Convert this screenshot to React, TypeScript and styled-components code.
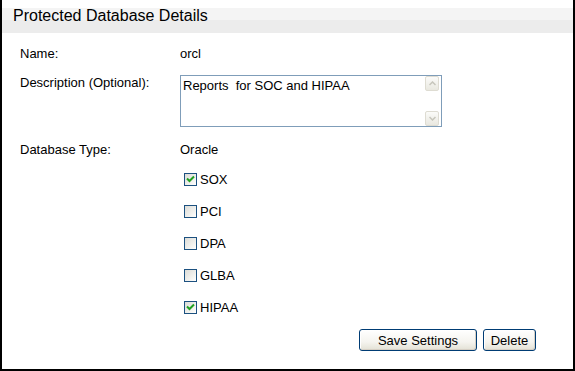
import React from "react";
import styled, { createGlobalStyle } from "styled-components";

const Global = createGlobalStyle`
  html, body { margin: 0; padding: 0; background: #fff; }
  body { font-family: "Liberation Sans", Arial, sans-serif; font-size: 13px; color: #000; }
`;

const Frame = styled.div`
  box-sizing: border-box;
  width: 575px;
  height: 371px;
  border-left: 2px solid #000;
  border-right: 2px solid #000;
  border-bottom: 2px solid #000;
  padding-top: 8px;
  display: flex;
  flex-direction: column;
  background: #fff;
`;

const Header = styled.div`
  height: 25px;
  background: linear-gradient(#f4f4f4 0, #f4f4f4 12px, #ececec 12px, #ececec 100%);
  padding-left: 11px;
  display: flex;
  align-items: flex-start;
  h1 {
    margin: 0;
    font-weight: normal;
    font-size: 16px;
    line-height: 18px;
    margin-top: -1px;
    color: #000;
  }
`;

const Body = styled.div`
  padding: 14px 0 0 18px;
  display: flex;
  flex-direction: column;
`;

const Row = styled.div<{ $gap?: number }>`
  display: grid;
  grid-template-columns: 160px 1fr;
  margin-top: ${(p) => p.$gap ?? 0}px;
  line-height: 14px;
`;

const Label = styled.div<{ $pad?: number }>`
  padding-top: ${(p) => p.$pad ?? 0}px;
`;

const TextBox = styled.div`
  box-sizing: border-box;
  width: 262px;
  height: 52px;
  border: 1px solid #7f9db9;
  display: flex;
  background: #fff;
`;

const TextInput = styled.textarea`
  flex: 1;
  border: none;
  outline: none;
  resize: none;
  overflow: hidden;
  font-family: "Liberation Sans", Arial, sans-serif;
  font-size: 13px;
  line-height: 14px;
  padding: 3px 2px;
  margin: 0;
  color: #000;
  background: transparent;
`;

const ScrollBar = styled.div`
  width: 14px;
  margin-right: 2px;
  display: flex;
  flex-direction: column;
  justify-content: space-between;
`;

const ScrollBtn = styled.div`
  box-sizing: border-box;
  width: 14px;
  height: 15px;
  border: 1px solid #dedcd2;
  border-radius: 2px;
  background: linear-gradient(#fbfbf9, #e9e8e0);
  display: flex;
  align-items: center;
  justify-content: center;
`;

const Checks = styled.div`
  display: flex;
  flex-direction: column;
  gap: 16px;
  margin-top: 14px;
  padding-left: 164px;
`;

const CheckRow = styled.label`
  display: flex;
  align-items: center;
  height: 16px;
  gap: 3px;
`;

const Box = styled.span`
  box-sizing: border-box;
  width: 13px;
  height: 13px;
  border: 1px solid #1c5180;
  background: linear-gradient(135deg, #dcdcd7 0%, #f4f4f1 70%, #fff 100%);
  display: flex;
  align-items: center;
  justify-content: center;
`;

const Actions = styled.div`
  display: flex;
  justify-content: flex-end;
  gap: 6px;
  margin-top: 14px;
  padding-right: 37px;
`;

const Button = styled.button<{ $w: number }>`
  box-sizing: border-box;
  width: ${(p) => p.$w}px;
  height: 22px;
  border: 1px solid #003c74;
  border-radius: 3px;
  background: linear-gradient(#ffffff 0%, #f5f4ef 60%, #e3e1d5 100%);
  box-shadow: inset -1px -1px 0 #d6d0c5, inset 1px 1px 0 #fff;
  font-family: "Liberation Sans", Arial, sans-serif;
  font-size: 13px;
  color: #000;
  padding: 0;
  cursor: pointer;
`;

const Arrow = ({ up }: { up?: boolean }) => (
  <svg width="7" height="5" viewBox="0 0 7 5">
    <path
      d={up ? "M0.5 4 L3.5 1 L6.5 4" : "M0.5 1 L3.5 4 L6.5 1"}
      fill="none"
      stroke="#c7c6bc"
      strokeWidth="1.5"
    />
  </svg>
);

const Check = ({ checked }: { checked: boolean }) => (
  <Box>
    {checked && (
      <svg width="9" height="8" viewBox="0 0 9 8">
        <path d="M1 3.5 L3.5 6 L8 1.5" fill="none" stroke="#21a121" strokeWidth="2" />
      </svg>
    )}
  </Box>
);

const items = [
  { name: "SOX", checked: true },
  { name: "PCI", checked: false },
  { name: "DPA", checked: false },
  { name: "GLBA", checked: false },
  { name: "HIPAA", checked: true },
];

export default function App() {
  return (
    <>
      <Global />
      <Frame>
        <Header>
          <h1>Protected Database Details</h1>
        </Header>
        <Body>
          <Row>
            <Label>Name:</Label>
            <div>orcl</div>
          </Row>
          <Row $gap={14}>
            <Label $pad={1}>Description (Optional):</Label>
            <TextBox>
              <TextInput defaultValue="Reports  for SOC and HIPAA" />
              <ScrollBar>
                <ScrollBtn>
                  <Arrow up />
                </ScrollBtn>
                <ScrollBtn>
                  <Arrow />
                </ScrollBtn>
              </ScrollBar>
            </TextBox>
          </Row>
          <Row $gap={16}>
            <Label>Database Type:</Label>
            <div>Oracle</div>
          </Row>
          <Checks>
            {items.map((it) => (
              <CheckRow key={it.name}>
                <Check checked={it.checked} />
                <span>{it.name}</span>
              </CheckRow>
            ))}
          </Checks>
          <Actions>
            <Button $w={118}>Save Settings</Button>
            <Button $w={53}>Delete</Button>
          </Actions>
        </Body>
      </Frame>
    </>
  );
}
